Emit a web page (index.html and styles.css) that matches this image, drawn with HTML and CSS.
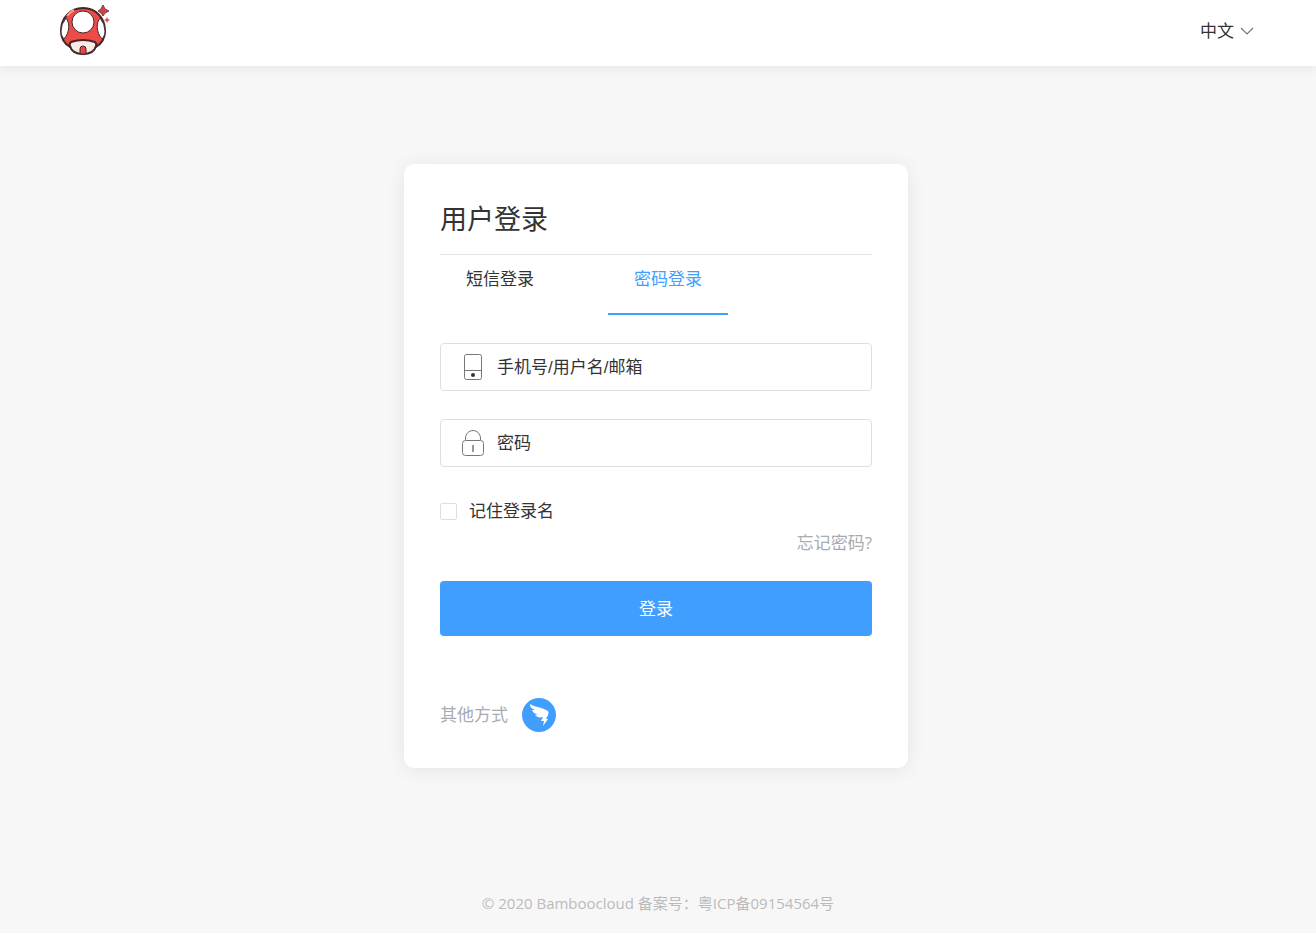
FILE: index.html
```html
<!DOCTYPE html>
<html lang="zh-CN">
	<head>
		<meta charset="utf-8">
		<meta name="viewport" content="width=device-width, initial-scale=1">
		<title>用户登录</title>
		<link rel="stylesheet" href="styles.css">
	</head>
	<body>
		<header class="header">
			<a href="#" class="logo" aria-label="Bamboocloud">
				<svg width="52" height="52" viewBox="0 0 52 52" stroke="#40282c" stroke-linejoin="round">
					<path d="M25 3C12 3 3 13 3 26C3 34 7 39 12 42H38C43 39 47 34 47 26C47 13 38 3 25 3Z" fill="#ee4b46" stroke-width="2"/>
					<path d="M8 13C12 18 12 27 6 34C4 32 3 29 3 26Q3 19 8 13Z" fill="#fff"/>
					<path d="M42 13C38 18 38 27 44 34C46 32 47 29 47 26Q47 19 42 13Z" fill="#fff"/>
					<path d="M9 11Q12 7 16 5" fill="none" stroke="#ff9a90" stroke-width="2"/>
					<circle cx="25" cy="17" r="11" fill="#fff"/>
					<path d="M12 41Q11 39 13 37Q25 33 37 37Q39 39 38 41Q36 49 25 49Q14 49 12 41Z" fill="#fbe9e4" stroke-width="2"/>
					<path d="M22 49V44Q22 41 25 41Q28 41 28 44V49Z" fill="#e5474a"/>
					<path d="M45 0L47 4L51 6L47 8L45 11L43 8L40 6L43 4Z" fill="#c9464a" stroke="#8a3a3d"/>
					<path d="M49 12L50 14L52 15L50 16L49 18L48 16L46 15L48 14Z" fill="#d9534f" stroke="none"/>
				</svg>
			</a>
			<div class="lang">
				<select class="lang-select" aria-label="语言">
					<option>中文</option>
				</select>
				<svg width="14" height="8" viewBox="0 0 14 8"><path d="M1 1L7 7L13 1" fill="none" stroke="#777" stroke-width="1.2"/></svg>
			</div>
		</header>

		<main class="main">
			<form class="card">
				<h1 class="title">用户登录</h1>
				<div class="tabs">
					<button type="button" class="tab">短信登录</button>
					<button type="button" class="tab active">密码登录</button>
				</div>

				<label class="field">
					<svg width="24" height="28" viewBox="0 0 24 28" fill="none" stroke="#777">
						<rect x="3.5" y="1.5" width="17" height="25" rx="2"/>
						<path d="M3.5 17.5H20.5"/>
						<circle cx="12" cy="22" r="2" fill="#333" stroke="none"/>
					</svg>
					<input type="text" placeholder="手机号/用户名/邮箱" aria-label="手机号/用户名/邮箱">
				</label>
				<label class="field">
					<svg width="24" height="28" viewBox="0 0 24 28" fill="none" stroke="#777">
						<rect x="1.5" y="11.5" width="21" height="15" rx="3"/>
						<path d="M4.5 11V9A7.5 7.5 0 0 1 19.5 9V11"/>
						<path d="M12 16V23" stroke-width="1.5"/>
					</svg>
					<input type="password" placeholder="密码" aria-label="密码">
				</label>

				<label class="remember">
					<input type="checkbox">
					<span>记住登录名</span>
				</label>
				<a href="#" class="forgot">忘记密码?</a>
				<button type="submit" class="submit">登录</button>

				<div class="other">
					<span>其他方式</span>
					<a href="#" class="ding" aria-label="钉钉">
						<svg width="34" height="34" viewBox="0 0 34 34">
							<circle cx="17" cy="17" r="17" fill="#409eff"/>
							<path d="M8 6C12 9 19 9 24 12C27 13 27 15 26 17L24 21H26L21 28L22 23H19L21 19C17 20 15 19 13 17L16 16C12 16 11 14 10 12L13 12C9 10 8 9 8 6Z" fill="#fff"/>
						</svg>
					</a>
				</div>
			</form>
		</main>

		<footer class="footer">© 2020 Bamboocloud 备案号：粤ICP备09154564号</footer>
	</body>
</html>
```
FILE: styles.css
```css
* {
	box-sizing:border-box;
}
body {
	display:flex;
	flex-direction:column;
	min-height:100vh;
	margin:0;
	background:#f7f7f7;
	color:#333;
	font-family:"Open Sans","Noto Sans CJK SC",sans-serif;
	font-size:17px;
	line-height:24px;
}
button, input, select {
	font:inherit;
	color:inherit;
}
a {
	text-decoration:none;
}
svg {
	display:block;
	flex:none;
}
.header {
	display:flex;
	justify-content:space-between;
	align-items:center;
	height:66px;
	padding:0 62px 4px 58px;
	background:#fff;
	box-shadow:0 2px 12px rgba(0,0,0,0.08);
}
.lang {
	display:flex;
	align-items:center;
	gap:6px;
}
.lang-select {
	appearance:none;
	padding:0;
	border:0;
	background:none;
	cursor:pointer;
}
.main {
	flex:1;
	padding:98px 4px 40px 0;
}
.card {
	display:flex;
	flex-direction:column;
	max-width:504px;
	margin:0 auto;
	padding:36px;
	border-radius:10px;
	background:#fff;
	box-shadow:0 2px 20px rgba(0,0,0,0.08);
}
.title {
	margin:0;
	padding-bottom:16px;
	border-bottom:1px solid #e4e4e4;
	font-size:27px;
	font-weight:normal;
	line-height:38px;
}
.tabs {
	display:flex;
	gap:48px;
	margin-bottom:28px;
}
.tab {
	width:120px;
	height:60px;
	padding:0 0 10px;
	border:0;
	border-bottom:2px solid transparent;
	background:none;
	cursor:pointer;
}
.tab.active {
	border-color:#409eff;
	color:#409eff;
}
.field {
	display:flex;
	align-items:center;
	gap:12px;
	height:48px;
	margin-bottom:28px;
	padding:0 20px;
	border:1px solid #dcdfe6;
	border-radius:4px;
}
.field input {
	flex:1;
	min-width:0;
	padding:2px 0 0;
	border:0;
	outline:0;
	background:none;
	font-family:"Liberation Sans","Noto Sans CJK SC",sans-serif;
}
.field input::placeholder {
	color:#333;
	opacity:1;
}
.remember {
	display:flex;
	align-items:center;
	align-self:flex-start;
	gap:12px;
	margin:4px 0 8px;
}
.remember input {
	appearance:none;
	width:17px;
	height:17px;
	margin:0;
	border:1px solid #dcdfe6;
	border-radius:2px;
	background:#fff;
}
.remember input:checked {
	background:#409eff;
}
.forgot {
	align-self:flex-end;
	color:#a8abb2;
}
.submit {
	height:55px;
	margin:26px 0 62px;
	border:0;
	border-radius:4px;
	background:#409eff;
	color:#fff;
	cursor:pointer;
}
.other {
	display:flex;
	align-items:center;
	gap:14px;
	color:#a8abb2;
}
.footer {
	padding:0 0 18px;
	color:#bbb;
	font-size:15px;
	text-align:center;
}
```
